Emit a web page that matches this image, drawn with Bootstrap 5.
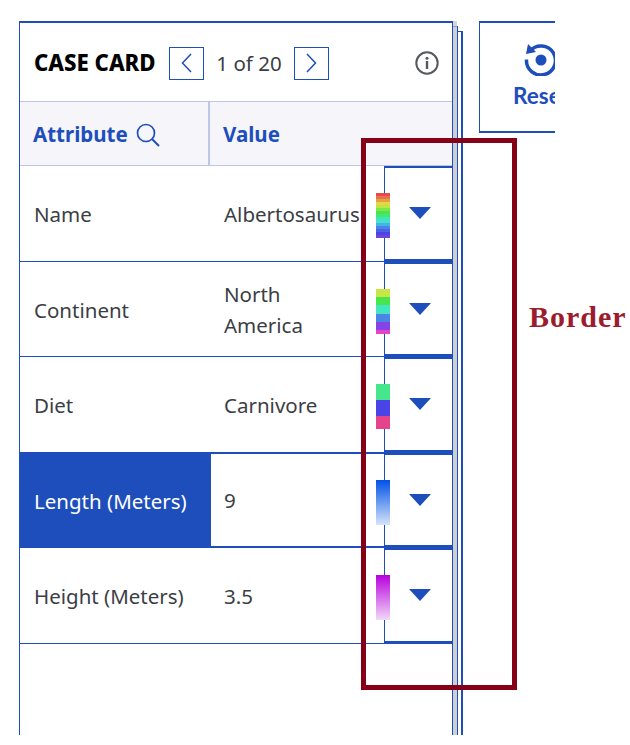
<!DOCTYPE html>
<html lang="en">
<head>
<meta charset="utf-8">
<title>Case card</title>
<link href="https://cdn.jsdelivr.net/npm/bootstrap@5.3.0/dist/css/bootstrap.min.css" rel="stylesheet">
<style>
:root { --cc-blue: #1d4ebb; --cc-line: #bcc7e6; --cc-text: #3b3e45; --cc-red: #860017; }
html, body { background: #fff; }
body { font-family: "Noto Sans", "Liberation Sans", sans-serif; color: var(--cc-text); font-size: 20.5px; overflow: hidden; }
.stage { width: 555px; height: 735px; padding: 21px 0 0 19px; overflow: hidden; }
.case-panel { width: 434px; flex: 0 0 434px; border-left: 1px solid var(--cc-blue); border-right: 1px solid var(--cc-blue); border-top: 2px solid var(--cc-blue); }
.panel-head { height: 78px; padding: 2px 13px 0 14px; }
.panel-title { font-size: 22.2px; font-weight: 800; color: #000; width: 122px; white-space: nowrap; }
.step-btn { width: 35px; height: 33px; padding: 0; border: 1.5px solid var(--cc-blue); border-radius: 0; background: #fff; }
.step-first { margin-left: 13px; }
.step-label { width: 90px; text-align: center; white-space: nowrap; }
.head-row { height: 65px; padding-top: 2px; background: #f5f5fa; border-top: 1px solid var(--cc-line); border-bottom: 1px solid var(--cc-line); color: var(--cc-blue); font-weight: 700; }
.head-attr { width: 190px; margin-top: -2px; padding-top: 2px; padding-left: 13px; border-right: 2px solid var(--cc-line); }
.head-val { padding-left: 13px; }
.data-row { height: 95.6px; border-bottom: 1px solid var(--cc-blue); }
.cell-attr { width: 191px; flex: 0 0 191px; padding-left: 14px; padding-top: 2px; white-space: nowrap; }
.cell-val { flex: 1 1 0; min-width: 0; padding-left: 13px; padding-top: 2px; line-height: 31px; overflow: hidden; white-space: nowrap; }
.cell-drop { flex: 0 0 68px; margin-bottom: -1px; border-left: 1px solid var(--cc-blue); border-top: 2px solid var(--cc-blue); border-bottom: 3px solid var(--cc-blue); position: relative; }
.is-selected { box-shadow: inset 0 2px 0 var(--cc-blue); border-bottom-width: 2px; margin-top: -1px; height: 96.6px; }
.is-selected .cell-attr { background: var(--cc-blue); color: #fff; margin-bottom: -2px; }
.is-selected .cell-drop { margin-top: 1px; margin-bottom: -2px; }
.swatch { position: absolute; left: -9px; top: 25px; width: 14px; height: 45px; }
.sw-rainbow { background: linear-gradient(180deg, #e64a4a 0 6.6%, #e6744a 6.6% 13.2%, #e6a044 13.2% 19.8%, #e6d644 19.8% 26.4%, #bce644 26.4% 33%, #7ee648 33% 39.6%, #46e64c 39.6% 46.2%, #44e67c 46.2% 52.8%, #44e6ac 52.8% 59.4%, #44e0d6 59.4% 66%, #44b4e6 66% 72.6%, #4a86e6 72.6% 79.2%, #4a62e6 79.2% 85.8%, #4a44e6 85.8% 92.4%, #7044d6 92.4% 100%); }
.sw-six { background: linear-gradient(180deg, #c8e644 0 18.2%, #46e64c 18.2% 36.4%, #44e6c0 36.4% 54.6%, #4a86e6 54.6% 72.8%, #8644e6 72.8% 91%, #e644c8 91% 100%); }
.sw-three { background: linear-gradient(180deg, #46e68c 0 35.5%, #4a44e6 35.5% 71%, #e6448a 71% 100%); }
.sw-blue { background: linear-gradient(180deg, #0052e6, #d6e4fa); }
.sw-violet { background: linear-gradient(180deg, #b800dc, #f2d9f8); }
.caret-svg { position: absolute; left: 24px; top: 39px; }
.strip-gray { flex: 0 0 4px; background: linear-gradient(180deg, #d6d6d6 0 5px, #8f9fc9 5px 6px, #cfcfcf 6px); }
.edge-one { flex: 0 0 1px; margin-top: 5px; background: var(--cc-blue); }
.edge-two { flex: 0 0 5px; margin-top: 10px; border-top: 1px solid var(--cc-blue); border-right: 2px solid var(--cc-blue); }
.reset-box { flex: 0 0 124px; height: 112px; margin-left: 16px; border: 1px solid var(--cc-blue); border-top-width: 2px; border-bottom-width: 2px; color: var(--cc-blue); font-family: Lato, "Noto Sans", sans-serif; font-weight: 700; font-size: 22.5px; line-height: 24px; text-align: center; padding-top: 19px; }
.reset-box svg { display: block; margin: 0 auto 8px; }
.callout-frame { position: absolute; left: 361px; top: 138px; width: 156px; height: 552px; border: 5px solid var(--cc-red); pointer-events: none; }
.callout-label { position: absolute; left: 529px; top: 299px; font-family: "Liberation Serif", serif; font-weight: 700; font-size: 30px; line-height: 36px; color: #9b1c2e; letter-spacing: 1px; }
</style>
</head>
<body>
<div class="stage d-flex align-items-start">
  <div class="case-panel align-self-stretch d-flex flex-column">
    <div class="panel-head d-flex align-items-center">
      <div class="panel-title">CASE CARD</div>
      <button class="step-btn step-first d-flex align-items-center justify-content-center" type="button" aria-label="Previous">
        <svg width="11" height="20" viewBox="0 0 11 20"><path d="M10 1 1.5 10 10 19" fill="none" stroke="#1d4ebb" stroke-width="1.5"/></svg>
      </button>
      <div class="step-label">1 of 20</div>
      <button class="step-btn d-flex align-items-center justify-content-center" type="button" aria-label="Next">
        <svg width="11" height="20" viewBox="0 0 11 20"><path d="M1 1 9.5 10 1 19" fill="none" stroke="#1d4ebb" stroke-width="1.5"/></svg>
      </button>
      <svg class="ms-auto" width="24" height="24" viewBox="0 0 24 24" aria-label="Info"><circle cx="12" cy="12" r="10.7" fill="none" stroke="#55585e" stroke-width="2"/><circle cx="12" cy="7.2" r="1.5" fill="#55585e"/><rect x="10.8" y="10" width="2.4" height="8" fill="#55585e"/></svg>
    </div>
    <div class="head-row d-flex">
      <div class="head-attr d-flex align-items-center">Attribute
        <svg class="ms-2" width="24" height="24" viewBox="0 0 24 24"><circle cx="10" cy="10" r="8.5" fill="none" stroke="#1d4ebb" stroke-width="1.7"/><path d="m16 16 7 7" stroke="#1d4ebb" stroke-width="2"/></svg>
      </div>
      <div class="head-val d-flex align-items-center">Value</div>
    </div>
    <div class="data-row d-flex">
      <div class="cell-attr d-flex align-items-center">Name</div>
      <div class="cell-val d-flex align-items-center">Albertosaurus</div>
      <div class="cell-drop"><span class="swatch sw-rainbow"></span><svg class="caret-svg" width="22" height="12" viewBox="0 0 22 12"><path d="M0 0h22L11 12z" fill="#1d4ebb"/></svg></div>
    </div>
    <div class="data-row d-flex">
      <div class="cell-attr d-flex align-items-center">Continent</div>
      <div class="cell-val d-flex align-items-center"><span>North<br>America</span></div>
      <div class="cell-drop"><span class="swatch sw-six"></span><svg class="caret-svg" width="22" height="12" viewBox="0 0 22 12"><path d="M0 0h22L11 12z" fill="#1d4ebb"/></svg></div>
    </div>
    <div class="data-row d-flex">
      <div class="cell-attr d-flex align-items-center">Diet</div>
      <div class="cell-val d-flex align-items-center">Carnivore</div>
      <div class="cell-drop"><span class="swatch sw-three"></span><svg class="caret-svg" width="22" height="12" viewBox="0 0 22 12"><path d="M0 0h22L11 12z" fill="#1d4ebb"/></svg></div>
    </div>
    <div class="data-row is-selected d-flex">
      <div class="cell-attr d-flex align-items-center">Length (Meters)</div>
      <div class="cell-val d-flex align-items-center">9</div>
      <div class="cell-drop"><span class="swatch sw-blue"></span><svg class="caret-svg" width="22" height="12" viewBox="0 0 22 12"><path d="M0 0h22L11 12z" fill="#1d4ebb"/></svg></div>
    </div>
    <div class="data-row d-flex">
      <div class="cell-attr d-flex align-items-center">Height (Meters)</div>
      <div class="cell-val d-flex align-items-center">3.5</div>
      <div class="cell-drop"><span class="swatch sw-violet"></span><svg class="caret-svg" width="22" height="12" viewBox="0 0 22 12"><path d="M0 0h22L11 12z" fill="#1d4ebb"/></svg></div>
    </div>
  </div>
  <div class="strip-gray align-self-stretch"></div>
  <div class="edge-one align-self-stretch"></div>
  <div class="edge-two align-self-stretch"></div>
  <div class="reset-box">
    <svg width="36" height="34" viewBox="0 0 36 34"><path d="M7 9A14.5 14.5 0 1 1 3.5 17.5" fill="none" stroke="#1d4ebb" stroke-width="3.5"/><path d="M3 12 5 2 13 10z" fill="#1d4ebb"/><circle cx="18" cy="18" r="5.5" fill="#1d4ebb"/></svg>
    Reset
  </div>
</div>
<div class="callout-frame"></div>
<div class="callout-label">Border</div>
<script src="https://cdn.jsdelivr.net/npm/bootstrap@5.3.0/dist/js/bootstrap.bundle.min.js"></script>
</body>
</html>
